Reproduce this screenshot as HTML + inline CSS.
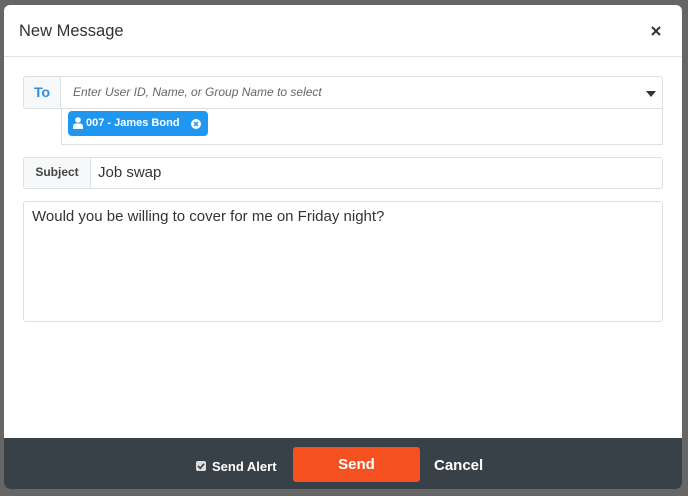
<!DOCTYPE html>
<html><head><style>
body{margin:0;width:688px;height:496px;background:#666;font-family:"Liberation Sans",sans-serif;overflow:hidden;position:relative}
.m{position:absolute;left:4px;top:5px;width:678px;height:484px;background:#fff;border-radius:6px;overflow:hidden}
.h{height:51px;border-bottom:1px solid #e3e5e8;position:relative}
.h .t{position:absolute;left:15px;top:17px;font-size:16.5px;color:#2d3338}
.to{position:absolute;left:19px;top:71px;width:640px;height:69px}
.tl{position:absolute;left:0;top:0;width:38px;border:1px solid #dde0e3;background:#f7f8f9;border-radius:3px 0 0 3px;color:#2a8ee0;font-weight:bold;font-size:14px;text-align:center;line-height:31px;box-sizing:border-box;height:33px}
.ti{position:absolute;left:38px;top:0;right:0;height:33px;border:1px solid #dde0e3;border-left:0;border-radius:0 3px 0 0;box-sizing:border-box;font-style:italic;color:#666;font-size:12px;line-height:31px;padding-left:12px}
.tb{position:absolute;left:38px;top:32px;right:0;height:37px;border:1px solid #dde0e3;border-top:0;box-sizing:border-box}
.chip{position:absolute;left:6px;top:3px;width:140px;height:25px;background:#1f96f0;border-radius:4px;color:#fff;font-size:11px;font-weight:bold;line-height:25px}
.sub{position:absolute;left:19px;top:152px;width:640px;height:32px;border:1px solid #dde0e3;border-radius:3px;box-sizing:border-box}
.sl{position:absolute;left:0;top:0;width:66px;height:30px;background:#f7f8f9;border-right:1px solid #dde0e3;font-size:12px;font-weight:bold;color:#444;line-height:29px;text-align:center}
.sv{position:absolute;left:74px;top:6px;font-size:15px;color:#333}
.ta{position:absolute;left:19px;top:196px;width:640px;height:121px;border:1px solid #dde0e3;border-radius:3px;box-sizing:border-box;padding:6px 8px;font-size:15px;color:#333}
.f{position:absolute;left:0;bottom:0;width:100%;height:51px;background:#384147}
.cb{position:absolute;left:192px;top:23px;width:10px;height:10px;background:#ddd;border-radius:2px}
.sa{position:absolute;left:208px;top:21px;color:#fff;font-weight:bold;font-size:13px}
.send{position:absolute;left:289px;top:9px;width:127px;height:35px;background:#f5501f;border-radius:3px;color:#fff;font-weight:bold;font-size:15px;text-align:center;line-height:36px}
.can{position:absolute;left:430px;top:19px;color:#fff;font-weight:bold;font-size:15px}
</style></head><body>
<div class="m">
<div class="h"><span class="t">New Message</span>
<svg style="position:absolute;right:21px;top:21px" width="10" height="10" viewBox="0 0 10 10"><path d="M1 1L9 9M9 1L1 9" stroke="#333" stroke-width="2"/></svg></div>
<div class="to">
<div class="tl">To</div>
<div class="ti">Enter User ID, Name, or Group Name to select
<svg style="position:absolute;right:6px;top:14px" width="10" height="6" viewBox="0 0 10 6"><path d="M0 0H10L5 6Z" fill="#333"/></svg></div>
<div class="tb"><div class="chip"><svg width="10" height="12" style="position:absolute;left:5px;top:6px" viewBox="0 0 10 12"><circle cx="5" cy="3" r="2.8" fill="#fff"/><path d="M0 12V9.5Q0 6.5 3 6.5H7Q10 6.5 10 9.5V12Z" fill="#fff"/></svg><span style="position:absolute;left:18px">007 - James Bond</span>
<svg style="position:absolute;left:123px;top:8px" width="10" height="10" viewBox="0 0 10 10"><circle cx="5" cy="5" r="5" fill="#fff"/><path d="M3 3L7 7M7 3L3 7" stroke="#1f96f0" stroke-width="1.5"/></svg></div></div>
</div>
<div class="sub"><div class="sl">Subject</div><div class="sv">Job swap</div></div>
<div class="ta">Would you be willing to cover for me on Friday night?</div>
<div class="f"><div class="cb"><svg width="10" height="10" viewBox="0 0 10 10" style="position:absolute;left:0;top:0"><path d="M2 5L4.3 7.3L8 2.7" stroke="#384147" stroke-width="1.6" fill="none"/></svg></div><span class="sa">Send Alert</span><div class="send">Send</div><span class="can">Cancel</span></div>
</div>
</body></html>
